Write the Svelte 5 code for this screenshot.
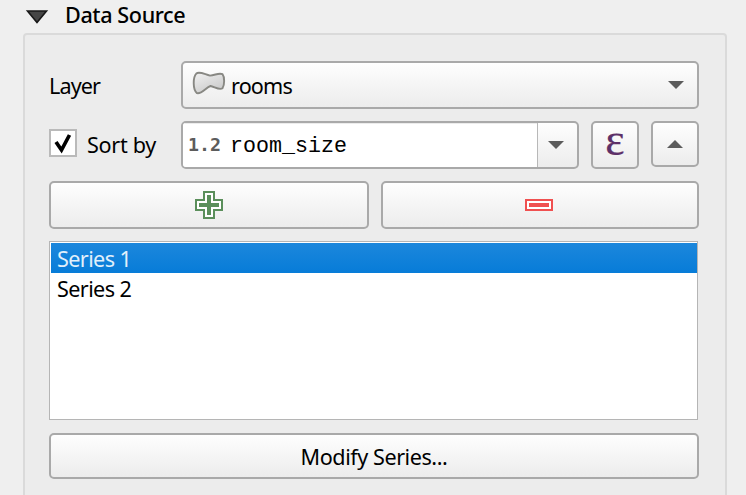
<script>
  let sorted = $state(true);
  let selected = $state(0);
  const series = ['Series 1', 'Series 2'];
</script>

<main>
  <header>
    <svg class="fold" width="24" height="16" viewBox="0 0 24 16"><path d="M2.5 2H21.5L12 13.5Z" fill="#454545" stroke="#181818" stroke-width="1.6" /></svg>
    <span class="heading">Data Source</span>
  </header>
  <section>
    <div class="row">
      <span class="label"><span class="layer">Layer</span></span>
      <button class="box combo">
        <svg width="34" height="26" viewBox="0 0 34 26">
          <defs><linearGradient id="poly" x1="0" y1="0" x2="0.6" y2="1"><stop offset="0" stop-color="#f2f2f2" /><stop offset="1" stop-color="#cacaca" /></linearGradient></defs>
          <path d="M4.5 2.3C8 0.4 13 3.5 18 4.6C23 4.3 27 1.5 30.5 3.2C32.7 6 32.7 14 30.5 17.3C27.5 19.6 22 15.5 18.5 15C14 16.5 9.5 23.5 5 22.2C0.6 18.5 0.8 6 4.5 2.3Z" fill="url(#poly)" stroke="#888883" stroke-width="1.9" />
        </svg>
        <span class="rooms">rooms</span>
        <svg class="arrow" width="16" height="8" viewBox="0 0 16 8"><path d="M0 0H16L8 8Z" fill="#5c5c5c" /></svg>
      </button>
    </div>
    <div class="row">
      <span class="label">
        <button class="check" aria-label="Sort by" onclick={() => (sorted = !sorted)}>
          {#if sorted}<svg width="20" height="22" viewBox="0 0 20 22"><path d="M3 10L8.5 18L16.5 3" fill="none" stroke="#000" stroke-width="3.7" /></svg>{/if}
        </button>
        <span class="sort">Sort by</span>
      </span>
      <div class="box field">
        <div class="entry"><span class="type">1.2</span><span class="name">room_size</span></div>
        <button class="drop" aria-label="Open list"><svg width="16" height="8" viewBox="0 0 16 8"><path d="M0 0H16L8 8Z" fill="#5c5c5c" /></svg></button>
      </div>
      <button class="box square" aria-label="Expression"><span class="eps">ε</span></button>
      <button class="box square up" aria-label="Ascending"><svg width="16" height="8" viewBox="0 0 16 8"><path d="M0 8H16L8 0Z" fill="#5c5c5c" /></svg></button>
    </div>
    <div class="row">
      <button class="box add" aria-label="Add series">
        <svg width="28" height="28" viewBox="0 0 28 28" shape-rendering="crispEdges">
          <path d="M9 1H19V9H27V19H19V27H9V19H1V9H9Z" fill="#fff" stroke="#5b8f5b" stroke-width="2" />
          <path d="M12 4H16V12H24V16H16V24H12V16H4V12H12Z" fill="#5b8f5b" />
        </svg>
      </button>
      <button class="box remove" aria-label="Remove series">
        <svg width="28" height="12" viewBox="0 0 28 12" shape-rendering="crispEdges">
          <path d="M1 1H27V11H1Z" fill="#fff" stroke="#f05050" stroke-width="2" />
          <path d="M4 4H24V8H4Z" fill="#f05050" />
        </svg>
      </button>
    </div>
    <div class="list">
      {#each series as item, i}
        <button class="item" class:selected={selected === i} onclick={() => (selected = i)}><span>{item}</span></button>
      {/each}
    </div>
    <button class="box modify"><span>Modify Series...</span></button>
  </section>
</main>

<style>
  :global(body) { background: #efefef; overflow: hidden; }
  main { box-sizing: border-box; width: 746px; height: 495px; overflow: hidden; color: #000; font: 21.6px/30px "Noto Sans", sans-serif; letter-spacing: -0.5px; }
  button { appearance: none; margin: 0; padding: 0; border: 0; background: none; color: inherit; font: inherit; letter-spacing: inherit; }
  svg { display: block; flex: none; }
  header { display: flex; align-items: center; height: 33px; padding: 0 25px; box-sizing: border-box; }
  .fold { margin-right: 16px; }
  .heading { font-weight: 500; letter-spacing: -0.4px; line-height: 30px; margin-top: -4px; }
  section { box-sizing: border-box; width: 704px; height: 480px; margin-left: 23px; padding: 26px 26px 0 24px; border: 2px solid #dadada; border-radius: 4px; background: #ececec; display: flex; flex-direction: column; gap: 12px; }
  .row { display: flex; gap: 12px; height: 48px; flex: none; }
  .label { width: 120px; display: flex; align-items: center; }
  .layer { letter-spacing: -0.9px; margin-top: 2px; }
  .sort { letter-spacing: -0.3px; margin-top: -1px; }
  .box { box-sizing: border-box; border: 2px solid #a9a9a9; border-radius: 5px; background: linear-gradient(#fefefe, #ececec); display: flex; align-items: center; justify-content: center; }
  .combo { width: 518px; justify-content: flex-start; padding: 0 13px 0 9px; }
  .combo > svg:first-child { margin-top: -3px; }
  .rooms { margin: 2px 0 0 5px; letter-spacing: -0.85px; }
  .arrow { margin-left: auto; }
  .check { width: 28px; height: 28px; box-sizing: border-box; border: 2px solid #bababa; background: #fff; display: flex; align-items: center; justify-content: center; margin: -4px 10px 0 0; }
  .field { width: 398px; justify-content: flex-start; align-items: stretch; overflow: hidden; }
  .entry { width: 354px; background: #fff; border-right: 1px solid #b8b8b8; box-shadow: inset 0 1px #ececec; display: flex; align-items: center; letter-spacing: 0; }
  .type { font: bold 18.3px/24px "DejaVu Sans Mono", monospace; color: #5c5c5c; margin: -1px 0 0 5px; width: 42px; }
  .name { font: 21.67px/26px "Liberation Mono", monospace; margin-top: 3px; }
  .drop { flex: 1; display: flex; align-items: center; justify-content: center; padding-right: 3px; }
  .square { width: 48px; }
  .up { height: 46px; }
  .eps { font: 46px/44px "Liberation Serif", serif; color: #5d3068; margin-top: -10px; letter-spacing: 0; -webkit-text-stroke: 0.2px #5d3068; }
  .add { width: 320px; }
  .remove { width: 318px; padding-right: 2px; }
  .list { box-sizing: border-box; width: 649px; height: 179px; flex: none; padding: 1px 0 0 1px; border: 1px solid #b5b5b5; background: #fff; }
  .item { display: block; width: 100%; height: 30px; padding-left: 6px; text-align: left; line-height: 32px; letter-spacing: -0.6px; }
  .selected { background: linear-gradient(#1c87dc, #077cd8); color: #e1f0fb; }
  .modify { width: 650px; height: 46px; flex: none; margin-top: 1px; letter-spacing: -0.45px; padding-top: 2px; }
</style>
